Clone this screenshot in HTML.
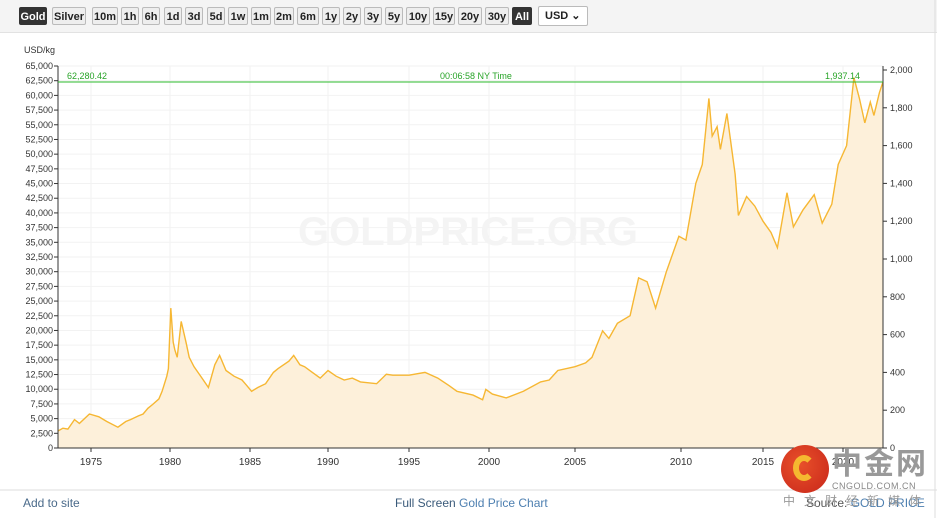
<!DOCTYPE html>
<html><head><meta charset="utf-8"><style>
body{margin:0;width:937px;height:518px;overflow:hidden;background:#fff;font-family:"Liberation Sans",sans-serif;position:relative}
.bar{position:absolute;left:0;top:0;width:937px;height:32px;background:#f4f4f4;border-bottom:1px solid #e2e2e2}
.b{position:absolute;top:7px;height:18px;line-height:18px;font-size:11px;font-weight:bold;border:1px solid #bbb;border-radius:2px;background:#eee;color:#222;text-align:center;box-sizing:border-box}
.d{background:#333;color:#fff;border-color:#333}
svg text{font-family:"Liberation Sans",sans-serif}
.foot{position:absolute;top:496px;font-size:12px;color:#4a6a8a}
</style></head><body>
<div class="bar" id="bar"></div>
<svg id="s" width="937" height="518" style="position:absolute;left:0;top:0"></svg>
<div class="foot" style="left:23px">Add to site</div>
<div class="foot" style="left:395px;color:#3a5a7a">Full Screen <span style="color:#4d7fb0">Gold Price Chart</span></div>
<div class="foot" style="left:806px;color:#555">Source: <span style="color:#4d7fb0">GOLD PRICE</span></div>
<div style="position:absolute;left:781px;top:445px;width:48px;height:48px;border-radius:50%;background:radial-gradient(circle at 40% 40%,#e8502a,#c8261a)"></div>
<div style="position:absolute;left:793px;top:455px;width:22px;height:26px;border-radius:50%;border:6px solid #f5b830;border-right-color:transparent;box-sizing:border-box"></div>
<div style="position:absolute;left:832px;top:444px;font-size:30px;font-weight:bold;color:#999;font-family:'Noto Sans CJK SC',sans-serif;letter-spacing:2px;line-height:34px">中金网</div>
<div style="position:absolute;left:832px;top:481px;font-size:9px;color:#888;letter-spacing:.5px">CNGOLD.COM.CN</div>
<div style="position:absolute;left:783px;top:492px;width:160px;white-space:nowrap;font-size:12px;color:#999;font-family:'Noto Sans CJK SC',sans-serif;letter-spacing:9px">中文财经新媒体</div>
<script>
var bar=document.getElementById('bar');
var bs=[["Gold",19,28,1],["Silver",52,34],["10m",92,26],["1h",121,18],["6h",142,18],["1d",164,18],["3d",185,18],["5d",207,18],["1w",228,20],["1m",251,20],["2m",274,20],["6m",297,22],["1y",322,18],["2y",343,18],["3y",364,18],["5y",385,18],["10y",406,24],["15y",433,22],["20y",458,24],["30y",485,24],["All",512,20,1]];
bs.forEach(function(b){var e=document.createElement('div');e.className='b'+(b[3]?' d':'');e.style.left=b[1]+'px';e.style.width=b[2]+'px';e.textContent=b[0];bar.appendChild(e)});
var u=document.createElement('div');u.className='b';u.style.cssText='left:538px;top:6px;width:50px;height:20px;background:#fff;text-align:left;padding-left:6px';u.textContent='USD ⌄';bar.appendChild(u);
var s='',L=58,R=883,T=66,B=448;
s+='<text x="24" y="53" font-size="9" fill="#333">USD/kg</text>';
for(var i=0;i<=26;i++){var v=i*2500,y=B-v*(B-T)/65000;s+='<line x1="'+L+'" x2="'+R+'" y1="'+y+'" y2="'+y+'" stroke="#f2f2f2"/><line x1="'+(L-4)+'" x2="'+L+'" y1="'+y+'" y2="'+y+'" stroke="#333"/><text x="'+(L-5)+'" y="'+(y+3)+'" font-size="9" text-anchor="end" fill="#333">'+v.toLocaleString('en-US')+'</text>';}
var K=[[1973,58],[1975,91],[1980,170],[1985,250],[1990,328],[1995,409],[2000,489],[2005,575],[2010,681],[2015,763],[2020,843],[2022.2,883]];
function X(yr){for(var i=0;i<K.length-1;i++){if(yr<=K[i+1][0]){var a=K[i],b=K[i+1];return a[1]+(yr-a[0])*(b[1]-a[1])/(b[0]-a[0]);}}return 883;}
for(var yr=1975;yr<=2020;yr+=5){var x=X(yr);s+='<line x1="'+x+'" x2="'+x+'" y1="'+T+'" y2="'+B+'" stroke="#f2f2f2"/><line x1="'+x+'" x2="'+x+'" y1="'+B+'" y2="'+(B+4)+'" stroke="#333"/><text x="'+x+'" y="'+(B+17)+'" font-size="10" text-anchor="middle" fill="#333">'+yr+'</text>';}
for(var i=0;i<=10;i++){var v=i*200,y=B-v*0.189;s+='<line x1="'+R+'" x2="'+(R+4)+'" y1="'+y+'" y2="'+y+'" stroke="#333"/><text x="'+(R+7)+'" y="'+(y+3)+'" font-size="9" fill="#333">'+v.toLocaleString('en-US')+'</text>';}
s+='<text x="468" y="245" font-size="40" font-weight="bold" text-anchor="middle" fill="#f4f4f4" font-family="Liberation Serif,serif">GOLDPRICE.ORG</text>';
var P=[[1973,90],[1973.3,105],[1973.6,100],[1974,150],[1974.3,130],[1974.9,180],[1975.5,165],[1976,140],[1976.7,110],[1977.2,140],[1977.5,150],[1978,170],[1978.3,180],[1978.6,210],[1978.9,230],[1979.3,260],[1979.5,300],[1979.8,380],[1979.9,420],[1980.05,740],[1980.2,560],[1980.3,520],[1980.45,480],[1980.7,670],[1981,560],[1981.2,480],[1981.5,430],[1982,370],[1982.4,320],[1982.8,440],[1983.1,490],[1983.5,410],[1984,380],[1984.5,360],[1984.8,330],[1985.1,300],[1985.5,320],[1986,340],[1986.5,400],[1986.8,420],[1987.5,460],[1987.8,490],[1988.2,440],[1988.5,430],[1989,400],[1989.5,370],[1990,410],[1990.5,380],[1991,360],[1991.5,370],[1992,350],[1993,340],[1993.6,390],[1994,385],[1995,385],[1996,400],[1996.8,370],[1997.5,330],[1998,300],[1999,280],[1999.6,255],[1999.8,310],[2000.2,285],[2001,265],[2002,300],[2003,350],[2003.5,360],[2004,410],[2005,430],[2005.5,450],[2005.8,480],[2006.3,620],[2006.6,580],[2007,660],[2007.6,700],[2008,900],[2008.4,880],[2008.8,740],[2009.3,930],[2009.9,1120],[2010.3,1100],[2010.9,1400],[2011.3,1500],[2011.7,1850],[2011.9,1650],[2012.2,1700],[2012.4,1580],[2012.8,1770],[2013.3,1450],[2013.5,1230],[2014,1330],[2014.5,1280],[2015,1200],[2015.5,1140],[2015.9,1060],[2016.5,1350],[2016.9,1170],[2017.5,1260],[2018.2,1340],[2018.7,1190],[2019.3,1290],[2019.7,1500],[2020.2,1600],[2020.6,1960],[2020.9,1850],[2021.2,1720],[2021.5,1830],[2021.7,1760],[2022,1880],[2022.2,1937]];
var pts=P.map(function(p){return X(p[0]).toFixed(1)+','+(B-p[1]*0.189).toFixed(1)});
var d='M'+pts.join(' L');
s+='<path d="'+d+' L'+R+','+B+' L'+L+','+B+'Z" fill="#fdf0da" stroke="none"/>';
s+='<path d="'+d+'" fill="none" stroke="#f6b733" stroke-width="1.4"/>';
s+='<line x1="'+L+'" x2="'+L+'" y1="'+T+'" y2="'+B+'" stroke="#333"/><line x1="'+R+'" x2="'+R+'" y1="'+T+'" y2="'+B+'" stroke="#333"/><line x1="'+L+'" x2="'+R+'" y1="'+B+'" y2="'+B+'" stroke="#333"/>';
s+='<line x1="'+L+'" x2="'+R+'" y1="82" y2="82" stroke="#2dbb2d"/>';
s+='<text x="67" y="79" font-size="9" fill="#28a428">62,280.42</text><text x="440" y="79" font-size="9" fill="#28a428">00:06:58 NY Time</text><text x="860" y="79" font-size="9" text-anchor="end" fill="#28a428">1,937.14</text>';
s+='<line x1="0" x2="937" y1="490" y2="490" stroke="#ddd"/><line x1="935" x2="935" y1="0" y2="518" stroke="#ddd"/>';
document.getElementById('s').innerHTML=s;
</script>
</body></html>
